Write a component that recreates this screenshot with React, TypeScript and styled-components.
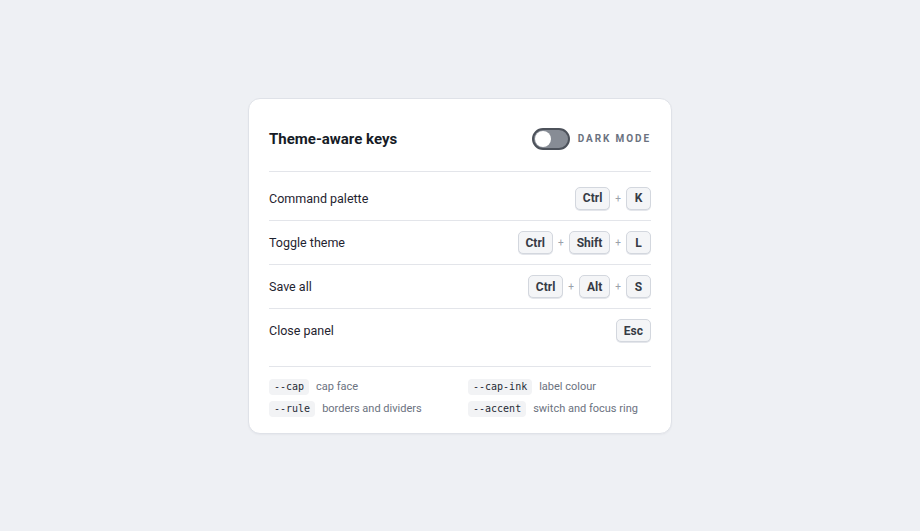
import styled, { createGlobalStyle } from "styled-components";

const GlobalStyle = createGlobalStyle`
  * { box-sizing: border-box; }
  body {
    margin: 0;
    background: #eef0f4;
    font-family: Roboto, "Liberation Sans", sans-serif;
  }
`;

const Page = styled.div`
  min-height: 100vh;
  display: flex;
  align-items: center;
  justify-content: center;
`;

const Card = styled.section`
  width: 424px;
  background: #ffffff;
  border: 1px solid #dfe2e8;
  border-radius: 12px;
  box-shadow: 0 1px 2px rgba(16, 24, 40, 0.04);
  padding: 20px 20px 15px;
`;

const Header = styled.header`
  height: 40px;
  display: flex;
  align-items: center;
  justify-content: space-between;
  margin-bottom: 12px;
`;

const Title = styled.h1`
  margin: 0;
  font-size: 15px;
  font-weight: 700;
  color: #161b26;
`;

const ModeSwitch = styled.label`
  display: flex;
  align-items: center;
  gap: 8px;
  cursor: pointer;
`;

const Track = styled.span<{ $on: boolean }>`
  position: relative;
  width: 38px;
  height: 22px;
  border-radius: 11px;
  border: 2px solid #4d525b;
  background: ${(p) => (p.$on ? "#3b82f6" : "#878c95")};
`;

const Knob = styled.span<{ $on: boolean }>`
  position: absolute;
  top: 1px;
  left: ${(p) => (p.$on ? "17px" : "1px")};
  width: 16px;
  height: 16px;
  border-radius: 50%;
  background: #ffffff;
`;

const SwitchLabel = styled.span`
  font-size: 10px;
  font-weight: 700;
  letter-spacing: 1.9px;
  color: #6b7280;
`;

const List = styled.div`
  border-top: 1px solid #e3e5ea;
  border-bottom: 1px solid #e3e5ea;
  padding: 4px 0 14px;
`;

const Row = styled.div`
  height: 44px;
  padding-top: 1px;
  display: flex;
  align-items: center;
  justify-content: space-between;
  & + & {
    border-top: 1px solid #e3e5ea;
  }
`;

const Action = styled.span`
  font-size: 12.5px;
  color: #1f2430;
`;

const Combo = styled.div`
  display: flex;
  align-items: center;
  gap: 5px;
`;

const Cap = styled.kbd`
  height: 23px;
  min-width: 25px;
  padding: 0 7px;
  display: inline-flex;
  align-items: center;
  justify-content: center;
  font-family: Roboto, "Liberation Sans", sans-serif;
  font-size: 12px;
  font-weight: 700;
  color: #363b45;
  background: #f4f5f7;
  border: 1px solid #d3d7de;
  border-radius: 5px;
  box-shadow: 0 1px 0 #e4e6eb;
`;

const Plus = styled.span`
  font-size: 10px;
  color: #9aa0aa;
`;

const Legend = styled.div`
  display: grid;
  grid-template-columns: 1fr 1fr;
  column-gap: 16px;
  row-gap: 4px;
  padding-top: 11px;
`;

const LegendItem = styled.div`
  height: 18px;
  display: flex;
  align-items: center;
  gap: 7px;
`;

const Token = styled.code`
  font-family: "DejaVu Sans Mono", "Liberation Mono", monospace;
  font-size: 10px;
  color: #262b35;
  background: #f2f3f5;
  border-radius: 4px;
  padding: 2px 5px;
  line-height: 12px;
`;

const Note = styled.span`
  font-size: 11px;
  color: #6b7280;
`;

const shortcuts = [
  { label: "Command palette", keys: ["Ctrl", "K"] },
  { label: "Toggle theme", keys: ["Ctrl", "Shift", "L"] },
  { label: "Save all", keys: ["Ctrl", "Alt", "S"] },
  { label: "Close panel", keys: ["Esc"] },
];

const tokens = [
  { name: "--cap", note: "cap face" },
  { name: "--cap-ink", note: "label colour" },
  { name: "--rule", note: "borders and dividers" },
  { name: "--accent", note: "switch and focus ring" },
];

export default function App() {
  const dark = false;
  return (
    <>
      <GlobalStyle />
      <Page>
        <Card>
          <Header>
            <Title>Theme-aware keys</Title>
            <ModeSwitch>
              <Track $on={dark}>
                <Knob $on={dark} />
              </Track>
              <SwitchLabel>DARK MODE</SwitchLabel>
            </ModeSwitch>
          </Header>
          <List>
            {shortcuts.map((s) => (
              <Row key={s.label}>
                <Action>{s.label}</Action>
                <Combo>
                  {s.keys.map((k, i) => (
                    <Combo key={k}>
                      {i > 0 && <Plus>+</Plus>}
                      <Cap>{k}</Cap>
                    </Combo>
                  ))}
                </Combo>
              </Row>
            ))}
          </List>
          <Legend>
            {tokens.map((t) => (
              <LegendItem key={t.name}>
                <Token>{t.name}</Token>
                <Note>{t.note}</Note>
              </LegendItem>
            ))}
          </Legend>
        </Card>
      </Page>
    </>
  );
}
